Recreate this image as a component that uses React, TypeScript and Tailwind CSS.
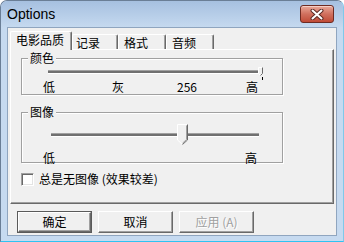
import React from "react";

const cjk = { fontFamily: '"Noto Sans CJK SC", "Noto Sans", sans-serif' };

// classic raised 3D edge
const raised =
  "border border-t-white border-l-white border-r-[#696969] border-b-[#696969] shadow-[inset_-1px_-1px_0_#a0a0a0]";

function Tab({ label, selected, width, pad }: { label: string; selected?: boolean; width: string; pad: string }) {
  if (selected) {
    return (
      <div
        className={`relative z-10 -mb-[1px] h-[19px] ${width} ${pad} rounded-t-[2px] border border-b-0 border-t-white border-l-white border-r-[#696969] bg-[#f0f0f0] pt-[1px] text-[12px] leading-[14px] shadow-[inset_-1px_0_0_#a0a0a0]`}
      >
        {label}
      </div>
    );
  }
  return (
    <div
      className={`h-[15px] ${width} ${pad} rounded-t-[2px] border border-b-0 border-t-white border-l-white border-r-[#696969] bg-[#f0f0f0] pt-[1px] text-[12px] leading-[13px] shadow-[inset_-1px_0_0_#a0a0a0]`}
    >
      {label}
    </div>
  );
}

function Track({ width }: { width: string }) {
  return <div className={`${width} h-[4px] border-t border-t-[#a0a0a0] border-b border-b-white bg-[#707070]`} />;
}

function GroupBox({ title, height, children }: { title: string; height: string; children: React.ReactNode }) {
  return (
    <div
      className={`relative ml-[10px] w-[262px] ${height} border border-[#a0a0a0] shadow-[inset_1px_1px_0_#fff,1px_1px_0_#fff]`}
    >
      <div className="absolute -top-[8px] left-[6px] bg-[#f0f0f0] px-[2px] text-[12px] leading-[14px]">{title}</div>
      {children}
    </div>
  );
}

function Button({ label, isDefault, disabled }: { label: string; isDefault?: boolean; disabled?: boolean }) {
  const inner = (
    <div
      className={`flex h-full w-full items-center justify-center ${raised} bg-[#f0f0f0] text-[12px] leading-[14px] ${
        disabled ? "text-[#a0a0a0] [text-shadow:1px_1px_0_#fff]" : "text-black"
      }`}
    >
      {label}
    </div>
  );
  if (isDefault) {
    return <div className="h-[22px] w-[75px] border border-[#5a5a5a]">{inner}</div>;
  }
  return <div className="h-[22px] w-[75px]">{inner}</div>;
}

export default function App() {
  return (
    <div
      className="flex h-[242px] w-[344px] flex-col overflow-hidden rounded-t-[7px] border border-[#6a7e96] border-b-[#2ec3f2] border-r-[#7fc9ea] bg-[#c6daf0]"
      style={cjk}
    >
      {/* Title bar */}
      <div className="flex h-[26px] items-start justify-between bg-gradient-to-b from-[#a6c0e0] to-[#c5d9ef]">
        <div
          className="ml-[6px] mt-[4px] text-[14px] leading-[18px] text-black"
          style={{ fontFamily: '"Liberation Sans", Arial, sans-serif' }}
        >
          Options
        </div>
        <div className="mr-[9px] mt-[4px] flex h-[18px] w-[34px] items-center justify-center rounded-[3px] border border-[#6e2b22] bg-gradient-to-b from-[#e9a99a] via-[#d0705e] to-[#c04a36] shadow-[inset_0_1px_0_#f5cfc6]">
          <svg width="14" height="11" viewBox="0 0 14 11">
            <path d="M2.5 1.5 L11.5 9.5 M11.5 1.5 L2.5 9.5" stroke="#5b2a24" strokeWidth="4" strokeLinecap="round" />
            <path d="M2.5 1.5 L11.5 9.5 M11.5 1.5 L2.5 9.5" stroke="#ffffff" strokeWidth="2" strokeLinecap="round" />
          </svg>
        </div>
      </div>

      {/* Client area */}
      <div className="mx-[6px] mb-[5px] flex flex-1 flex-col border border-[#8fa5bf] bg-[#f0f0f0]">
        {/* Tabs */}
        <div className="ml-[2px] mt-[3px] flex h-[18px] items-end">
          <Tab label="电影品质" selected width="w-[62px]" pad="pl-[5px]" />
          <Tab label="记录" width="w-[46px]" pad="pl-[3px]" />
          <Tab label="格式" width="w-[48px]" pad="pl-[5px]" />
          <Tab label="音频" width="w-[48px]" pad="pl-[5px]" />
        </div>

        {/* Tab page */}
        <div className={`ml-[2px] h-[155px] w-[324px] ${raised} bg-[#f0f0f0] pt-[8px]`}>
          <GroupBox title="颜色" height="h-[37px]">
            <div className="relative ml-[26px] mt-[11px] w-[214px]">
              <Track width="w-[214px]" />
              <svg className="absolute -top-[3px] left-[210px]" width="6" height="14" viewBox="0 0 6 14">
                <path d="M0.5 0.5 H4.5 V6.5 L2.5 8.5 L0.5 6.5 Z" fill="#f0f0f0" stroke="#ffffff" />
                <path d="M4.5 0.5 V6.5 L2.5 8.5" fill="none" stroke="#696969" />
                <path d="M4.5 10 V13" stroke="#000" />
              </svg>
            </div>
            <div className="ml-[21px] mt-[6px] flex text-[12px] leading-[13px]">
              <span>低</span>
              <span className="ml-[57px]">灰</span>
              <span className="ml-[53px]">256</span>
              <span className="ml-[49px]">高</span>
            </div>
          </GroupBox>

          <div className="mt-[17px]">
            <GroupBox title="图像" height="h-[51px]">
              <div className="relative ml-[29px] mt-[20px] w-[208px]">
                <Track width="w-[208px]" />
                <svg className="absolute -top-[9px] left-[126px]" width="11" height="21" viewBox="0 0 11 21">
                  <path d="M0.5 0.5 H10.5 V16 L5.5 20.5 L0.5 16 Z" fill="#f0f0f0" stroke="#ffffff" />
                  <path d="M10.5 0.5 V16 L5.5 20.5" fill="none" stroke="#696969" />
                  <path d="M9.5 1.5 V15.5 L5.5 19.2" fill="none" stroke="#a0a0a0" />
                </svg>
              </div>
              <div className="ml-[21px] mt-[14px] flex text-[12px] leading-[13px]">
                <span>低</span>
                <span className="ml-[190px]">高</span>
              </div>
            </GroupBox>
          </div>

          {/* Checkbox */}
          <div className="ml-[10px] mt-[9px] flex items-center text-[12px] leading-[14px]">
            <div className="h-[13px] w-[13px] border border-t-[#a0a0a0] border-l-[#a0a0a0] border-r-white border-b-white bg-white shadow-[inset_1px_1px_0_#696969,inset_-1px_-1px_0_#e3e3e3]" />
            <span className="ml-[5px]">总是无图像 (效果较差)</span>
          </div>
        </div>

        {/* Buttons */}
        <div className="ml-[9px] mt-[7px] flex gap-[6px]">
          <Button label="确定" isDefault />
          <Button label="取消" />
          <Button label="应用 (A)" disabled />
        </div>
      </div>
    </div>
  );
}
